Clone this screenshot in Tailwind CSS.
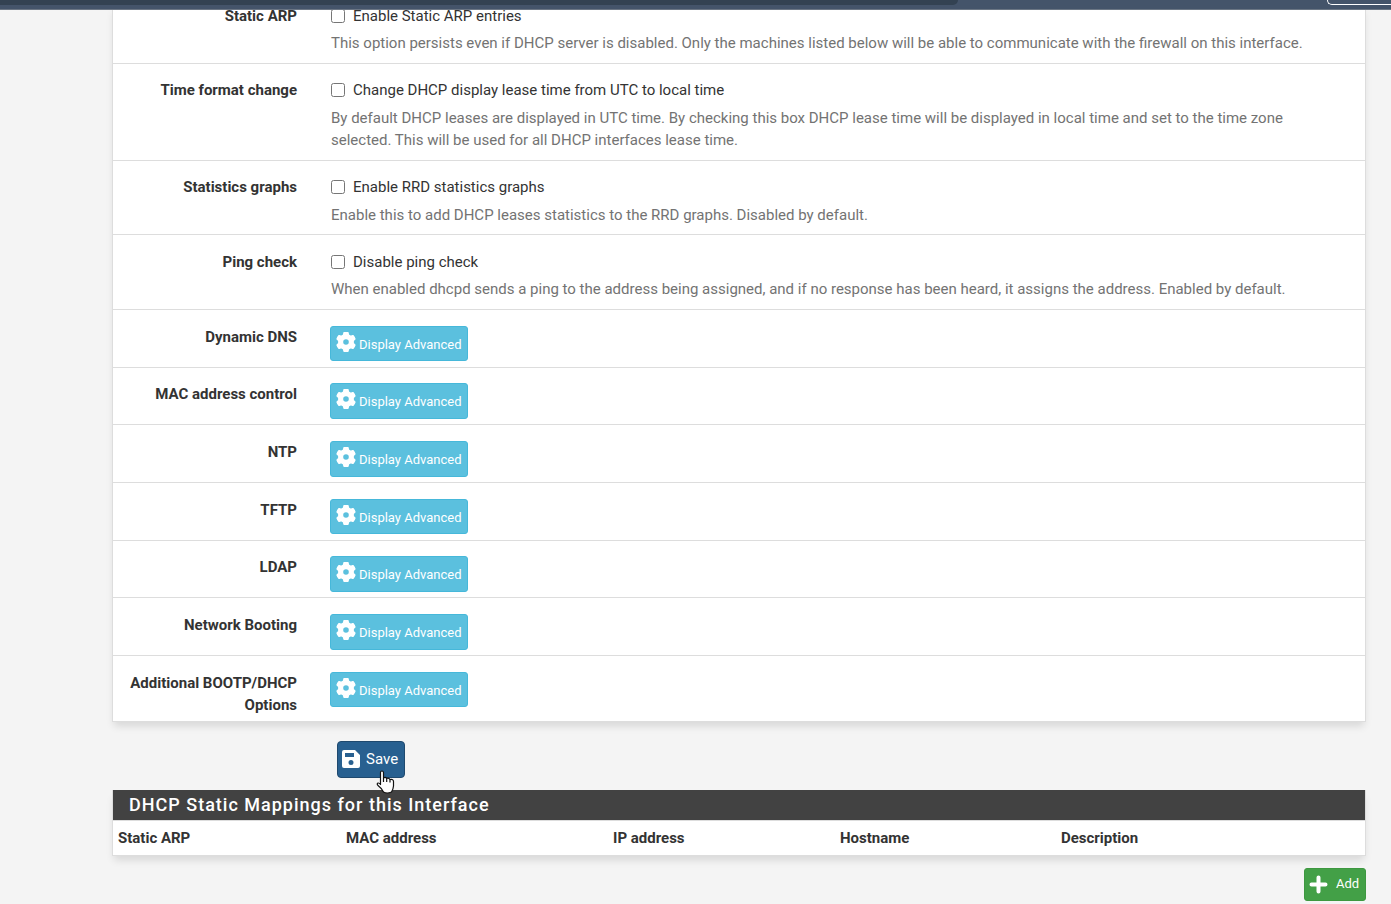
<!DOCTYPE html>
<html lang="en">
<head>
<meta charset="utf-8">
<title>DHCP Server</title>
<script src="https://cdn.jsdelivr.net/npm/@tailwindcss/browser@4"></script>
</head>
<body class="bg-[#f4f4f4] font-['Roboto',sans-serif] text-[15px] leading-[22px] text-[#333] overflow-x-hidden">
<svg class="hidden">
  <symbol id="cog" viewBox="0 0 20 20"><path fill="currentColor" fill-rule="evenodd" d="M8 .8Q10 .3 12 .8L12.5 3.2Q13.6 3.6 14.5 4.3L16.9 3.6Q18.3 5 18.9 7L17.1 8.7Q17.3 10 17.1 11.3L18.9 13Q18.3 15 16.9 16.4L14.5 15.7Q13.6 16.4 12.5 16.8L12 19.2Q10 19.7 8 19.2L7.5 16.8Q6.4 16.4 5.5 15.7L3.1 16.4Q1.7 15 1.1 13L2.9 11.3Q2.7 10 2.9 8.7L1.1 7Q1.7 5 3.1 3.6L5.5 4.3Q6.4 3.6 7.5 3.2ZM10 6.5A3.5 3.5 0 1 0 10 13.5A3.5 3.5 0 1 0 10 6.500Z" stroke="currentColor" stroke-width="1.400" stroke-linejoin="round"/></symbol>
</svg>
<header class="relative z-10 h-[10px] bg-[#44546a] border-b border-[#6b7684] flex justify-between overflow-hidden">
  <div class="w-[958px] h-[5px] bg-[#334252] rounded-br-[10px]"></div>
  <div class="w-[64px] h-[5px] border-b border-l border-white rounded-bl-[12px]"></div>
</header>
<main class="-mt-[5px] ml-28 mr-[25px]">
  <form>
  <section class="bg-white border-x border-b border-[#ddd] shadow-[0_6px_8px_-2px_rgba(0,0,0,0.12)]">
    <div class="flex h-[59px] border-b border-[#ddd]">
      <label for="arp" class="w-[184px] shrink-0 text-right font-bold">Static ARP</label>
      <div class="ml-[34px]">
        <label class="flex items-center gap-2"><input id="arp" type="checkbox" class="size-[14px]">Enable Static ARP entries</label>
        <p class="mt-[5px] text-[#737373]">This option persists even if DHCP server is disabled. Only the machines listed below will be able to communicate with the firewall on this interface.</p>
      </div>
    </div>
    <div class="flex h-[97px] pt-[15px] border-b border-[#ddd]">
      <label for="tf" class="w-[184px] shrink-0 text-right font-bold">Time format change</label>
      <div class="ml-[34px] pr-9">
        <label class="flex items-center gap-2"><input id="tf" type="checkbox" class="size-[14px]">Change DHCP display lease time from UTC to local time</label>
        <p class="mt-[6px] text-[#737373]">By default DHCP leases are displayed in UTC time. By checking this box DHCP lease time will be displayed in local time and set to the time zone selected. This will be used for all DHCP interfaces lease time.</p>
      </div>
    </div>
    <div class="flex h-[74px] pt-[15px] border-b border-[#ddd]">
      <label for="rrd" class="w-[184px] shrink-0 text-right font-bold">Statistics graphs</label>
      <div class="ml-[34px]">
        <label class="flex items-center gap-2"><input id="rrd" type="checkbox" class="size-[14px]">Enable RRD statistics graphs</label>
        <p class="mt-[6px] text-[#737373]">Enable this to add DHCP leases statistics to the RRD graphs. Disabled by default.</p>
      </div>
    </div>
    <div class="flex h-[75px] pt-4 border-b border-[#ddd]">
      <label for="ping" class="w-[184px] shrink-0 text-right font-bold">Ping check</label>
      <div class="ml-[34px]">
        <label class="flex items-center gap-2"><input id="ping" type="checkbox" class="size-[14px]">Disable ping check</label>
        <p class="mt-[5px] text-[#737373]">When enabled dhcpd sends a ping to the address being assigned, and if no response has been heard, it assigns the address. Enabled by default.</p>
      </div>
    </div>
    <div class="flex h-[58px] pt-4 border-b border-[#ddd]">
      <label for="b1" class="w-[184px] shrink-0 text-right font-bold">Dynamic DNS</label>
      <button id="b1" type="button" class="ml-[33px] flex h-[35px] w-[138px] gap-[3px] rounded-[3px] border border-[#46b8da] bg-[#5bc0de] pl-[5px] pt-[5px] text-[13px] text-white"><svg class="size-5 shrink-0"><use href="#cog"/></svg><span class="pt-[2px]">Display Advanced</span></button>
    </div>
    <div class="flex h-[57px] pt-[15px] border-b border-[#ddd]">
      <label for="b2" class="w-[184px] shrink-0 text-right font-bold">MAC address control</label>
      <button id="b2" type="button" class="ml-[33px] flex h-9 w-[138px] gap-[3px] rounded-[3px] border border-[#46b8da] bg-[#5bc0de] pl-[5px] pt-[5px] text-[13px] text-white"><svg class="size-5 shrink-0"><use href="#cog"/></svg><span class="pt-[2px]">Display Advanced</span></button>
    </div>
    <div class="flex h-[58px] pt-4 border-b border-[#ddd]">
      <label for="b3" class="w-[184px] shrink-0 text-right font-bold">NTP</label>
      <button id="b3" type="button" class="ml-[33px] flex h-9 w-[138px] gap-[3px] rounded-[3px] border border-[#46b8da] bg-[#5bc0de] pl-[5px] pt-[5px] text-[13px] text-white"><svg class="size-5 shrink-0"><use href="#cog"/></svg><span class="pt-[2px]">Display Advanced</span></button>
    </div>
    <div class="flex h-[58px] pt-4 border-b border-[#ddd]">
      <label for="b4" class="w-[184px] shrink-0 text-right font-bold">TFTP</label>
      <button id="b4" type="button" class="ml-[33px] flex h-[35px] w-[138px] gap-[3px] rounded-[3px] border border-[#46b8da] bg-[#5bc0de] pl-[5px] pt-[5px] text-[13px] text-white"><svg class="size-5 shrink-0"><use href="#cog"/></svg><span class="pt-[2px]">Display Advanced</span></button>
    </div>
    <div class="flex h-[57px] pt-[15px] border-b border-[#ddd]">
      <label for="b5" class="w-[184px] shrink-0 text-right font-bold">LDAP</label>
      <button id="b5" type="button" class="ml-[33px] flex h-9 w-[138px] gap-[3px] rounded-[3px] border border-[#46b8da] bg-[#5bc0de] pl-[5px] pt-[5px] text-[13px] text-white"><svg class="size-5 shrink-0"><use href="#cog"/></svg><span class="pt-[2px]">Display Advanced</span></button>
    </div>
    <div class="flex h-[58px] pt-4 border-b border-[#ddd]">
      <label for="b6" class="w-[184px] shrink-0 text-right font-bold">Network Booting</label>
      <button id="b6" type="button" class="ml-[33px] flex h-9 w-[138px] gap-[3px] rounded-[3px] border border-[#46b8da] bg-[#5bc0de] pl-[5px] pt-[5px] text-[13px] text-white"><svg class="size-5 shrink-0"><use href="#cog"/></svg><span class="pt-[2px]">Display Advanced</span></button>
    </div>
    <div class="flex h-[65px] pt-4">
      <label for="b7" class="w-[184px] shrink-0 text-right font-bold">Additional BOOTP/DHCP Options</label>
      <button id="b7" type="button" class="ml-[33px] flex h-[35px] w-[138px] gap-[3px] rounded-[3px] border border-[#46b8da] bg-[#5bc0de] pl-[5px] pt-[5px] text-[13px] text-white"><svg class="size-5 shrink-0"><use href="#cog"/></svg><span class="pt-[2px]">Display Advanced</span></button>
    </div>
  </section>
  <div class="relative z-10 ml-[225px] mt-[19px] w-[68px]">
    <button type="submit" class="flex h-[37px] w-full items-center gap-[5px] rounded-[4px] border border-[#1f496e] bg-[#286090] pl-[3px] pb-px text-white">
      <svg class="size-5 shrink-0" viewBox="0 0 20 20"><path fill="currentColor" fill-rule="evenodd" d="M3 1H14L19 6V17Q19 19 17 19H3Q1 19 1 17V3Q1 1 3 1ZM4 4V8H13V4ZM10 11A2.500 2.500 0 1 0 10 16A2.500 2.500 0 1 0 10 11Z"/></svg>Save
    </button>
    <svg class="absolute left-[39px] top-[29px] h-[24px] w-[19px]" viewBox="0 0 19 24"><path fill="#fff" stroke="#111" stroke-width="1.200" stroke-linejoin="round" d="M4.500 2.500Q4.500 1 6 1Q7.300 1 7.500 2.500V8Q9.500 6.700 10.700 8.500Q12.700 7.500 14 9.500Q17.500 8.800 17.500 11.500V16Q17.300 19 15.500 22Q11 24 7.500 22Q6 18.500 2 15.500Q.5 13.500 2 13Q3.200 12.800 4.500 14.500Z"/><path stroke="#111" stroke-width="1.200" fill="none" d="M7.500 8V12M10.700 8.500V12M14 9.500V12.500"/></svg>
  </div>
  </form>
  <section class="mt-3 bg-white border-x border-b border-[#ddd] shadow-[0_6px_8px_-2px_rgba(0,0,0,0.12)]">
    <h2 class="h-[30px] bg-[#424242] pl-4 text-lg leading-[30px] font-medium tracking-[1px] text-white">DHCP Static Mappings for this Interface</h2>
    <table class="w-full table-fixed border-t border-[#ddd] text-left">
      <thead><tr class="h-[34px]">
        <th class="w-[228px] pl-[5px]">Static ARP</th>
        <th class="w-[267px] pl-[5px]">MAC address</th>
        <th class="w-[227px] pl-[5px]">IP address</th>
        <th class="w-[221px] pl-[5px]">Hostname</th>
        <th class="pl-[5px]">Description</th>
      </tr></thead>
    </table>
  </section>
  <nav class="mt-3 flex justify-end">
    <a href="#" class="flex h-[33px] w-[62px] items-center gap-2 rounded-[3px] border border-[#3d9840] bg-[#43a047] pl-1 text-[13px] text-white">
      <svg class="size-[19px] shrink-0" viewBox="0 0 19 19"><path d="M9.500 2.500V16.500M2.500 9.500H16.500" stroke="currentColor" stroke-width="4" stroke-linecap="round"/></svg>Add</a>
  </nav>
</main>
</body>
</html>
